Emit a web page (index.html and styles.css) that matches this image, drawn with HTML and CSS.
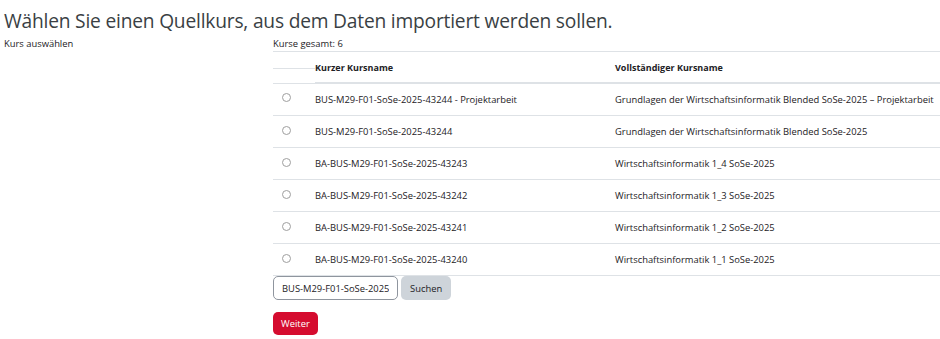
FILE: index.html
```html
<!DOCTYPE html>
<html lang="de">
<head>
    <meta charset="UTF-8">
    <title>Import</title>
    <link rel="stylesheet" href="styles.css">
</head>
<body>
    <h2 class="page-title">Wählen Sie einen Quellkurs, aus dem Daten importiert werden sollen.</h2>

    <div class="form-row">
        <div class="form-label">Kurs auswählen</div>
        <div class="form-field">
            <div class="total">Kurse gesamt: 6</div>
            <table class="course-table">
                <thead>
                    <tr>
                        <th class="col-select"><div class="select-head"></div></th>
                        <th class="col-short">Kurzer Kursname</th>
                        <th class="col-full">Vollständiger Kursname</th>
                    </tr>
                </thead>
                <tbody>
                    <tr>
                        <td class="col-select"><input type="radio" name="course"></td>
                        <td>BUS-M29-F01-SoSe-2025-43244 - Projektarbeit</td>
                        <td>Grundlagen der Wirtschaftsinformatik Blended SoSe-2025 – Projektarbeit</td>
                    </tr>
                    <tr>
                        <td class="col-select"><input type="radio" name="course"></td>
                        <td>BUS-M29-F01-SoSe-2025-43244</td>
                        <td>Grundlagen der Wirtschaftsinformatik Blended SoSe-2025</td>
                    </tr>
                    <tr>
                        <td class="col-select"><input type="radio" name="course"></td>
                        <td>BA-BUS-M29-F01-SoSe-2025-43243</td>
                        <td>Wirtschaftsinformatik 1_4 SoSe-2025</td>
                    </tr>
                    <tr>
                        <td class="col-select"><input type="radio" name="course"></td>
                        <td>BA-BUS-M29-F01-SoSe-2025-43242</td>
                        <td>Wirtschaftsinformatik 1_3 SoSe-2025</td>
                    </tr>
                    <tr>
                        <td class="col-select"><input type="radio" name="course"></td>
                        <td>BA-BUS-M29-F01-SoSe-2025-43241</td>
                        <td>Wirtschaftsinformatik 1_2 SoSe-2025</td>
                    </tr>
                    <tr>
                        <td class="col-select"><input type="radio" name="course"></td>
                        <td>BA-BUS-M29-F01-SoSe-2025-43240</td>
                        <td>Wirtschaftsinformatik 1_1 SoSe-2025</td>
                    </tr>
                </tbody>
            </table>

            <div class="search">
                <input type="text" class="search-input" value="BUS-M29-F01-SoSe-2025">
                <button class="btn btn-secondary">Suchen</button>
            </div>

            <button class="btn btn-primary">Weiter</button>
        </div>
    </div>
</body>
</html>
```

FILE: styles.css
```css
/* Basic page */
body {
    margin: 0;
    font-family: "Open Sans", "Noto Sans", sans-serif;
    font-size: 9.4px;
    color: #1d2125;
    background-color: #fff;
}

.page-title {
    margin: 0;
    padding: 8px 0 0 4px;
    font-size: 19.2px;
    font-weight: 400;
    line-height: 26px;
    color: #3a3f44;
    letter-spacing: -0.2px;
}

/* Form row: label left, field right */
.form-row {
    display: flex;
}

.form-label {
    width: 269px;
    padding: 3px 0 0 4px;
    line-height: 14px;
}

.form-field {
    flex: 1;
}

.total {
    padding-top: 3px;
    line-height: 14px;
    height: 14px;
}

/* Course table */
.course-table {
    width: 100%;
    table-layout: fixed;
    border-collapse: collapse;
}

.course-table th,
.course-table td {
    height: 31px;
    padding: 0;
    text-align: left;
    vertical-align: middle;
    border-top: 1px solid #dee2e6;
    white-space: nowrap;
}

.course-table td {
    line-height: 16px;
}

.course-table th {
    font-size: 9px;
    font-weight: 700;
    border-bottom: 2px solid #dee2e6;
    height: 30px;
}

.course-table th.col-select {
    border-bottom: none;
    vertical-align: top;
}

.select-head {
    height: 16px;
    border-bottom: 1px solid #dee2e6;
}

.course-table tbody tr:last-child td {
    border-bottom: 1px solid #dee2e6;
}

.col-select {
    width: 42px;
}

.course-table td.col-select input {
    margin: 2px 0 0 9px;
    width: 9px;
    height: 9px;
    accent-color: #888;
    opacity: 0.7;
}

.col-short {
    width: 300px;
}

/* Search */
.search {
    display: flex;
    gap: 3px;
}

.search-input {
    width: 125px;
    height: 24px;
    box-sizing: border-box;
    padding: 0 8px;
    border: 1px solid #8f959e;
    border-radius: 5px;
    font-family: inherit;
    font-size: 9.4px;
    color: #1d2125;
}

.btn {
    height: 24px;
    padding: 0 9px;
    border: none;
    border-radius: 5px;
    font-family: inherit;
    font-size: 9.4px;
    cursor: pointer;
}

.btn-secondary {
    background-color: #ced4da;
    color: #1d2125;
}

.btn-primary {
    display: block;
    margin-top: 12px;
    height: 23px;
    padding: 0 8px;
    background-color: #d50c2f;
    color: #fff;
}
```
